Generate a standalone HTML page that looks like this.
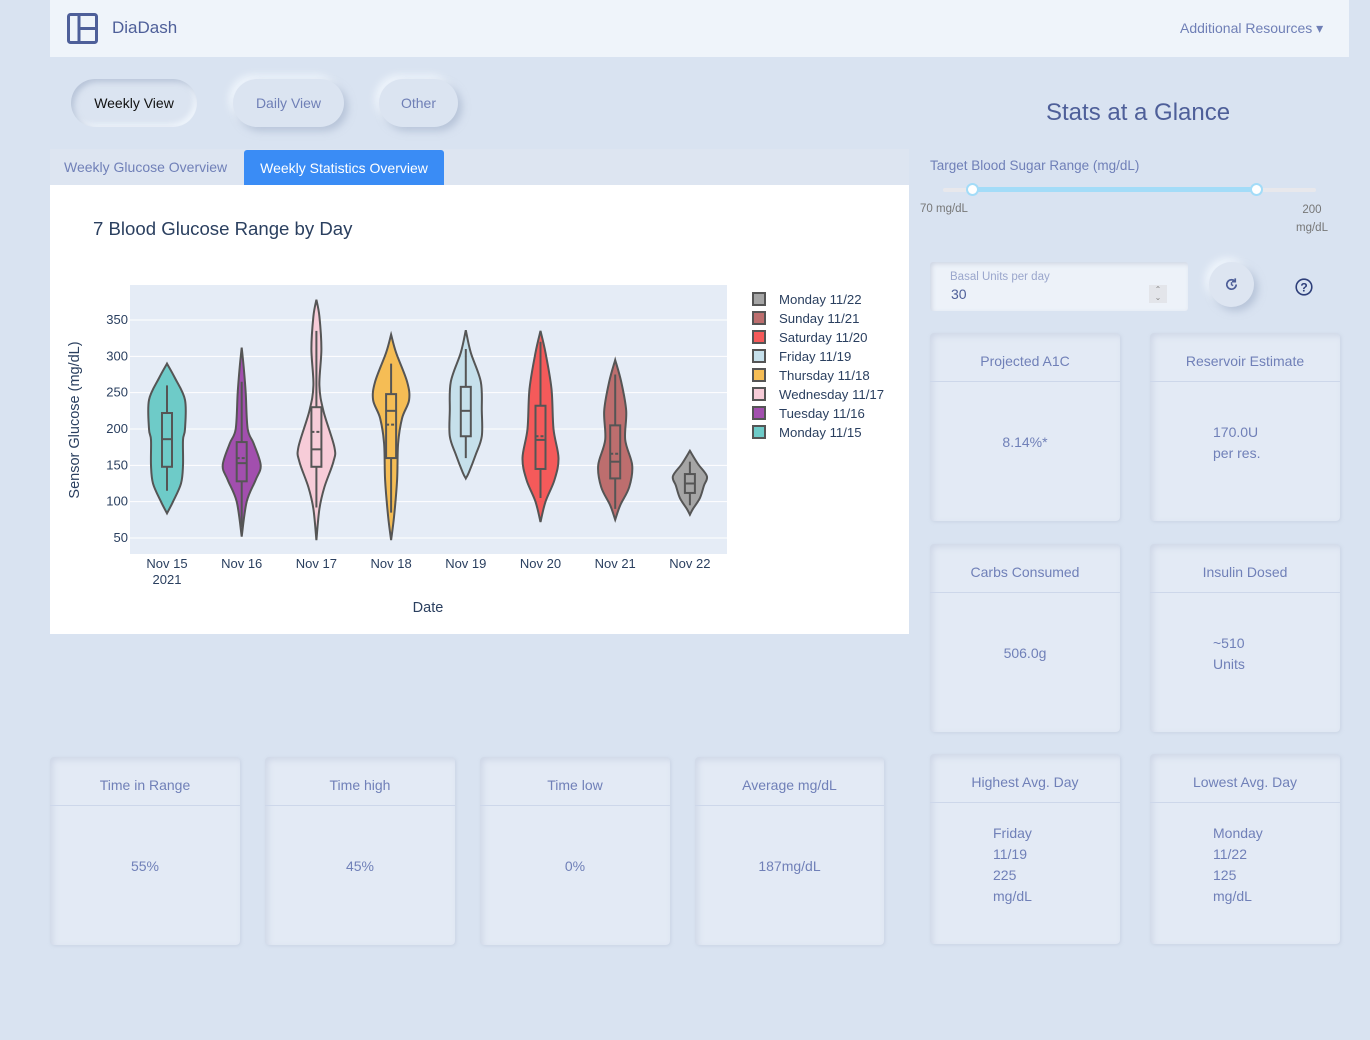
<!DOCTYPE html>
<html><head><meta charset="utf-8"><style>
*{box-sizing:border-box;margin:0;padding:0}
body{width:1370px;height:1040px;background:#d9e3f1;font-family:"Liberation Sans",sans-serif;position:relative;overflow:hidden;color:#6f7fb6}
.abs{position:absolute}
.nav{left:50px;top:0;width:1299px;height:57px;background:#eff4fa}
.pill{position:absolute;top:79px;height:48px;border-radius:24px;background:#dbe4f1;font-size:14px;display:flex;align-items:center;justify-content:center;box-shadow:4px 4px 8px rgba(160,175,200,.6),-4px -4px 8px rgba(245,250,255,.8)}
.card{position:absolute;background:#e3eaf5;border-radius:4px;box-shadow:inset 3px 3px 6px rgba(190,200,220,.5),1px 1px 3px rgba(180,190,210,.4);text-align:center;font-size:14px;color:#7080b8}
.card .h{height:49px;border-bottom:1px solid #cdd7ea;display:flex;align-items:center;justify-content:center;padding-top:7px}
.card .b{position:absolute;left:0;right:0;top:49px;bottom:18px;display:flex;align-items:center;justify-content:center;line-height:21px}
.card .l{justify-content:flex-start;padding-left:63px;text-align:left}
</style></head><body>
<div class="abs nav">
<svg class="abs" style="left:17px;top:13px" width="31" height="31" viewBox="0 0 31 31"><rect x="1.5" y="1.5" width="28" height="28" rx="2" fill="none" stroke="#4e5f99" stroke-width="3"/><line x1="12" y1="2" x2="12" y2="29" stroke="#4e5f99" stroke-width="3"/><line x1="12" y1="15.5" x2="29" y2="15.5" stroke="#4e5f99" stroke-width="3"/></svg>
<div class="abs" style="left:62px;top:18px;font-size:17px;color:#4e5f99">DiaDash</div>
<div class="abs" style="left:1130px;top:20px;font-size:14px;color:#6f7fb6">Additional Resources ▾</div>
</div>
<div class="pill" style="left:71px;width:126px;color:#111;box-shadow:inset 3px 3px 6px rgba(160,175,200,.6),inset -3px -3px 6px rgba(245,250,255,.8)">Weekly View</div>
<div class="pill" style="left:233px;width:111px">Daily View</div>
<div class="pill" style="left:379px;width:79px">Other</div>
<div class="abs" style="left:1046px;top:99px;font-size:24px;color:#4e5f99">Stats at a Glance</div>
<div class="abs" style="left:50px;top:149px;width:859px;height:36px;background:#dde5f1"></div>
<div class="abs" style="left:64px;top:159px;font-size:14px;color:#7080b8">Weekly Glucose Overview</div>
<div class="abs" style="left:244px;top:150px;width:200px;height:35px;background:#3a8cf5;border-radius:3px 3px 0 0;color:#fff;font-size:14px;display:flex;align-items:center;justify-content:center">Weekly Statistics Overview</div>
<div class="abs" style="left:50px;top:185px;width:859px;height:449px;background:#fff"></div>
<svg class="abs" style="left:0;top:0" width="910" height="640" id="ch" font-family="Liberation Sans,sans-serif">
<text x="93" y="235" font-size="18.6" fill="#2a3f5f">7 Blood Glucose Range by Day</text>
<rect x="130" y="285" width="597" height="269" fill="#e5ecf6"/>
<g id="grid"></g>
<g id="vio"></g>
<text x="428" y="612" font-size="14.5" fill="#2a3f5f" text-anchor="middle">Date</text>
<text transform="translate(79,420) rotate(-90)" font-size="14.5" fill="#2a3f5f" text-anchor="middle">Sensor Glucose (mg/dL)</text>
<g id="leg" font-size="13.2" fill="#2a3f5f"></g>
</svg>
<div class="abs" style="left:930px;top:158px;font-size:13.5px;color:#7080b8">Target Blood Sugar Range (mg/dL)</div>
<div class="abs" style="left:943px;top:188px;width:373px;height:4px;background:#e8e8ec;border-radius:2px"></div>
<div class="abs" style="left:972px;top:187px;width:285px;height:5px;background:#a3dcf8"></div>
<div class="abs" style="left:966px;top:183px;width:13px;height:13px;border-radius:50%;background:#fff;border:2px solid #a3dcf8"></div>
<div class="abs" style="left:1250px;top:183px;width:13px;height:13px;border-radius:50%;background:#fff;border:2px solid #a3dcf8"></div>
<div class="abs" style="left:920px;top:203px;font-size:11.5px;color:#777">70 mg/dL</div>
<div class="abs" style="left:1296px;top:201px;font-size:11.5px;color:#777;text-align:center;line-height:18px">200<br>mg/dL</div>
<div class="abs" style="left:930px;top:262px;width:258px;height:49px;background:#edf2f9;border-radius:3px;box-shadow:inset 2px 2px 4px rgba(180,190,210,.5)"></div>
<div class="abs" style="left:950px;top:271px;font-size:11.5px;color:#9aa6cc">Basal Units per day</div>
<div class="abs" style="left:951px;top:286px;font-size:14px;color:#4e5f99">30</div>
<div class="abs" style="left:1149px;top:285px;width:18px;height:18px;background:#e3e5ea;font-size:8px;color:#888;text-align:center;line-height:8px;padding-top:1px">⌃<br>⌄</div>
<div class="abs" style="left:1209px;top:262px;width:45px;height:45px;border-radius:50%;background:#dde5f1;box-shadow:4px 4px 8px rgba(160,175,200,.6),-4px -4px 8px rgba(245,250,255,.8)"></div>
<svg class="abs" style="left:1224px;top:277px" width="15" height="15" viewBox="0 0 16 16"><path d="M13 8a5 5 0 1 1-1.5-3.6" fill="none" stroke="#4e5f99" stroke-width="1.8"/><path d="M12 1.5v3.5h-3.5" fill="none" stroke="#4e5f99" stroke-width="1.8"/><path d="M8 5.5v2.7l1.8 1" fill="none" stroke="#4e5f99" stroke-width="1.5"/></svg>
<svg class="abs" style="left:1295px;top:278px" width="18" height="18" viewBox="0 0 18 18"><circle cx="9" cy="9" r="7.8" fill="none" stroke="#2e3f7a" stroke-width="1.6"/><text x="9" y="13.5" font-size="12" text-anchor="middle" fill="#2e3f7a" font-weight="bold" font-family="Liberation Sans">?</text></svg>
<div class="card" style="left:930px;top:333px;width:190px;height:188px"><div class="h">Projected A1C</div><div class="b">8.14%*</div></div>
<div class="card" style="left:1150px;top:333px;width:190px;height:188px"><div class="h">Reservoir Estimate</div><div class="b l"><div>170.0U<br>per res.</div></div></div>
<div class="card" style="left:930px;top:544px;width:190px;height:188px"><div class="h">Carbs Consumed</div><div class="b">506.0g</div></div>
<div class="card" style="left:1150px;top:544px;width:190px;height:188px"><div class="h">Insulin Dosed</div><div class="b l"><div>~510<br>Units</div></div></div>
<div class="card" style="left:930px;top:754px;width:190px;height:190px"><div class="h">Highest Avg. Day</div><div class="b l"><div>Friday<br>11/19<br>225<br>mg/dL</div></div></div>
<div class="card" style="left:1150px;top:754px;width:190px;height:190px"><div class="h">Lowest Avg. Day</div><div class="b l"><div>Monday<br>11/22<br>125<br>mg/dL</div></div></div>
<div class="card" style="left:50px;top:757px;width:190px;height:188px"><div class="h">Time in Range</div><div class="b">55%</div></div>
<div class="card" style="left:265px;top:757px;width:190px;height:188px"><div class="h">Time high</div><div class="b">45%</div></div>
<div class="card" style="left:480px;top:757px;width:190px;height:188px"><div class="h">Time low</div><div class="b">0%</div></div>
<div class="card" style="left:695px;top:757px;width:189px;height:188px"><div class="h">Average mg/dL</div><div class="b">187mg/dL</div></div>
<script>
var NS="http://www.w3.org/2000/svg";
function Y(v){return 538-(v-50)*0.7267}
function el(t,a,p,txt){var e=document.createElementNS(NS,t);for(var k in a)e.setAttribute(k,a[k]);if(txt)e.textContent=txt;p.appendChild(e);return e}
var g=document.getElementById('grid');
[50,100,150,200,250,300,350].forEach(function(v){el('line',{x1:130,x2:727,y1:Y(v),y2:Y(v),stroke:'#fff','stroke-width':1},g);el('text',{x:128,y:Y(v)+4,'font-size':13,fill:'#2a3f5f','text-anchor':'end'},g,v)});
var V=[
{c:'#6ecbc8',p:[[290,0],[270,8],[240,18],[200,18],[185,16],[150,16],[125,14],[100,6],[84,0]],b:[148,222,186,186,115,260]},
{c:'#a24fae',p:[[312,0],[285,2],[250,4],[200,6],[180,12],[150,19],[130,14],[100,5],[52,0]],b:[128,182,153,160,65,265]},
{c:'#f7ccd8',p:[[378,0],[355,3],[310,5],[260,3],[225,7],[175,18],[155,17],[120,8],[90,3],[47,0]],b:[148,230,172,196,92,335]},
{c:'#f5bd55',p:[[330,0],[305,5],[265,16],[240,18],[215,11],[180,7],[130,6],[80,3],[47,0]],b:[160,248,225,206,85,290]},
{c:'#c6e0eb',p:[[336,0],[305,5],[265,15],[225,16],[190,16],[165,10],[140,3],[132,0]],b:[190,258,225,225,160,310]},
{c:'#f55a5a',p:[[335,0],[305,5],[255,11],[200,13],[160,18],[130,14],[100,5],[72,0]],b:[145,232,185,190,105,320]},
{c:'#bd6e6e',p:[[295,0],[265,6],[225,11],[185,10],[150,17],[120,14],[95,5],[75,0]],b:[132,205,155,166,90,275]},
{c:'#a5a5a5',p:[[170,0],[152,8],[135,17],[122,14],[105,10],[90,3],[82,0]],b:[112,138,125,125,95,155]}];
var vg=document.getElementById('vio');
var lab=['Nov 15','Nov 16','Nov 17','Nov 18','Nov 19','Nov 20','Nov 21','Nov 22'];
function spline(pts){var d='M'+pts[0][0]+','+pts[0][1];for(var i=0;i<pts.length-1;i++){var p0=pts[i-1]||pts[i],p1=pts[i],p2=pts[i+1],p3=pts[i+2]||p2;d+=' C'+(p1[0]+(p2[0]-p0[0])/6)+','+(p1[1]+(p2[1]-p0[1])/6)+' '+(p2[0]-(p3[0]-p1[0])/6)+','+(p2[1]-(p3[1]-p1[1])/6)+' '+p2[0]+','+p2[1]}return d}
V.forEach(function(o,i){var cx=167+i*74.7;var R=o.p.map(function(q){return[cx+q[1],Y(q[0])]});var L=o.p.slice().reverse().map(function(q){return[cx-q[1],Y(q[0])]});
var d=spline(R)+' '+spline(L).replace('M','L')+'Z';
el('path',{d:d,fill:o.c,stroke:'#555','stroke-width':2},vg);
var b=o.b;el('line',{x1:cx,x2:cx,y1:Y(b[4]),y2:Y(b[5]),stroke:'#555','stroke-width':2},vg);
el('rect',{x:cx-5,y:Y(b[1]),width:10,height:Y(b[0])-Y(b[1]),fill:o.c,stroke:'#555','stroke-width':2},vg);
el('line',{x1:cx-5,x2:cx+5,y1:Y(b[2]),y2:Y(b[2]),stroke:'#555','stroke-width':2},vg);
if(b[3]!=b[2])el('line',{x1:cx-5,x2:cx+5,y1:Y(b[3]),y2:Y(b[3]),stroke:'#555','stroke-width':2,'stroke-dasharray':'3,2'},vg);
el('text',{x:cx,y:568,'font-size':13,fill:'#2a3f5f','text-anchor':'middle'},vg,lab[i]);});
el('text',{x:167,y:584,'font-size':13,fill:'#2a3f5f','text-anchor':'middle'},vg,'2021');
var lg=document.getElementById('leg');var names=['Monday 11/22','Sunday 11/21','Saturday 11/20','Friday 11/19','Thursday 11/18','Wednesday 11/17','Tuesday 11/16','Monday 11/15'];
names.forEach(function(n,i){var y=299+i*19;el('rect',{x:753,y:y-6,width:12,height:12,fill:V[7-i].c,stroke:'#555','stroke-width':2},lg);el('text',{x:779,y:y+5},lg,n)});
</script>
</body></html>
